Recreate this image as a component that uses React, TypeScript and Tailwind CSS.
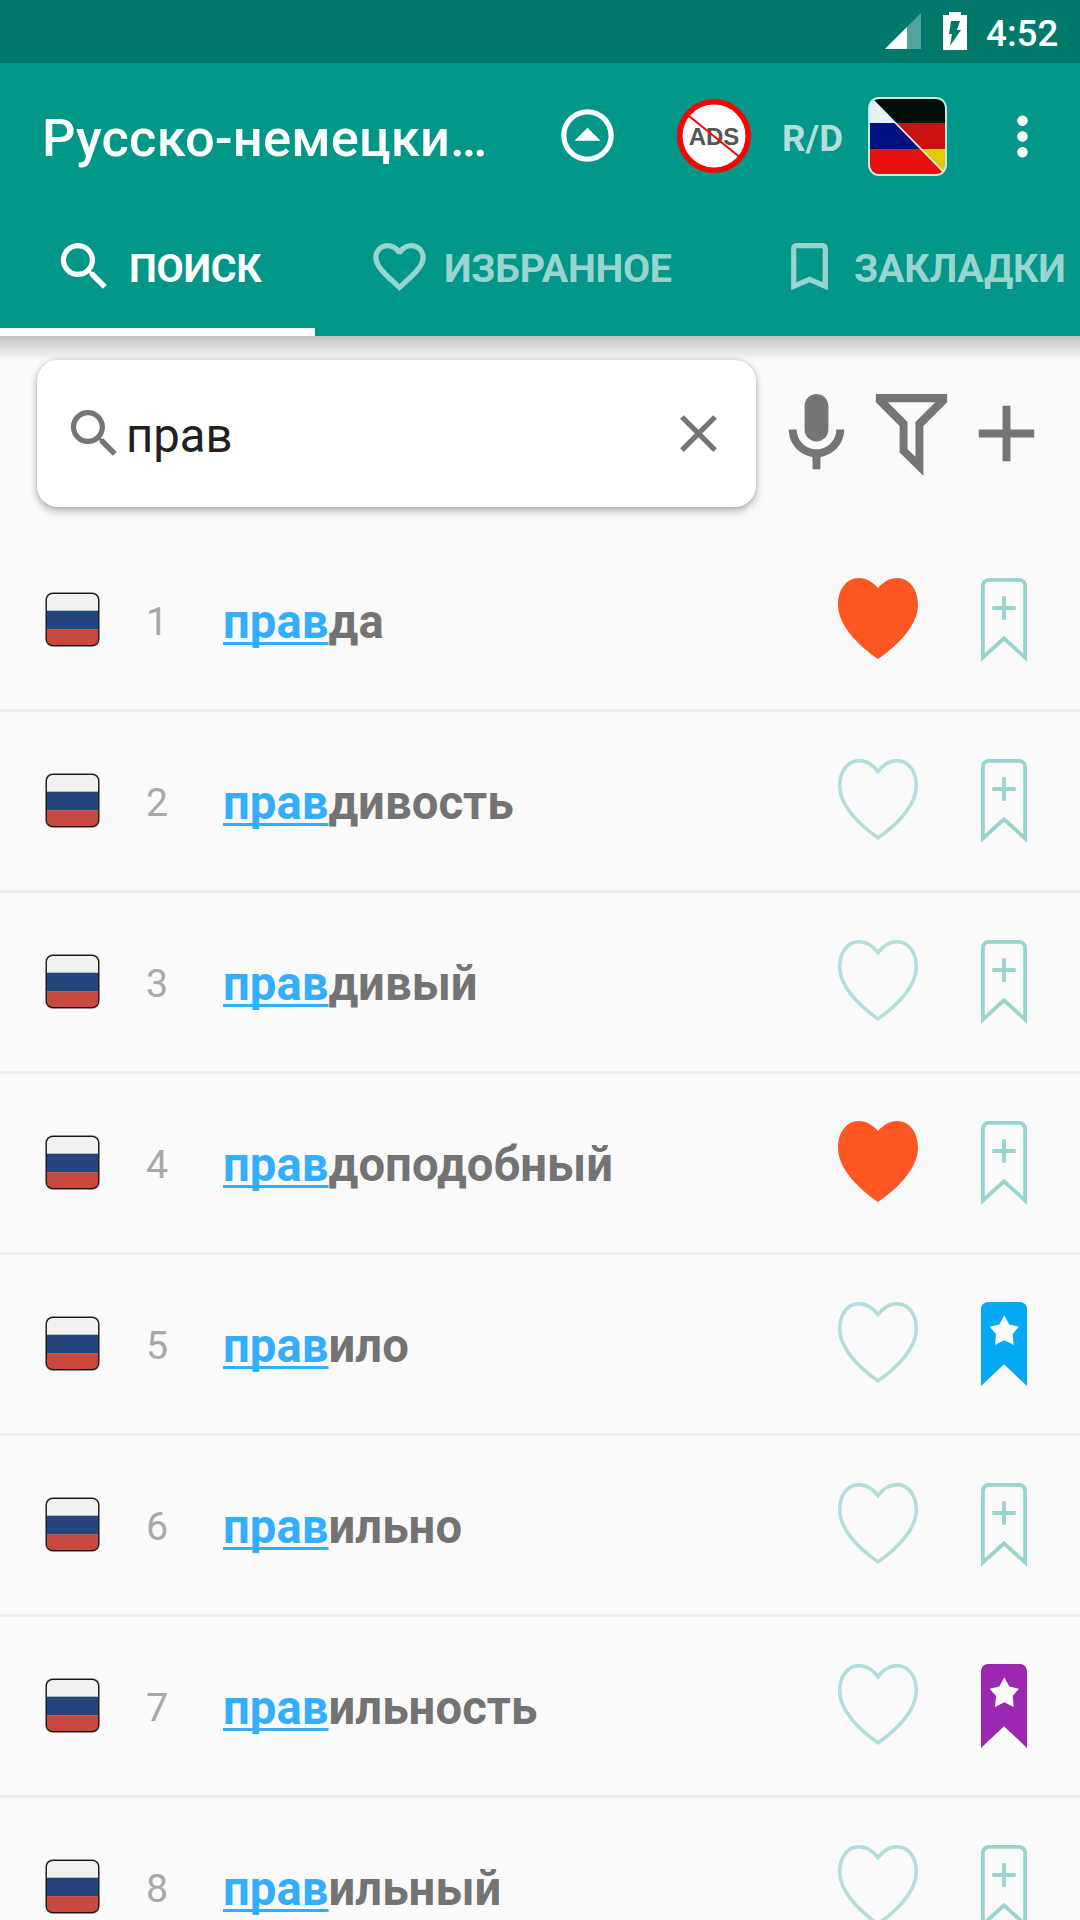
import type { ReactNode } from 'react'
import clsx from 'clsx'

type Mark = 'none' | 'blue' | 'purple'

const query = 'прав'

const words: { rest: string; liked?: boolean; mark?: Mark }[] = [
  { rest: 'да', liked: true },
  { rest: 'дивость' },
  { rest: 'дивый' },
  { rest: 'доподобный', liked: true },
  { rest: 'ило', mark: 'blue' },
  { rest: 'ильно' },
  { rest: 'ильность', mark: 'purple' },
  { rest: 'ильный' },
]

const SEARCH =
  'M15.5 14h-.79l-.28-.27C15.41 12.59 16 11.11 16 9.5 16 5.91 13.09 3 9.5 3S3 5.91 3 9.5 5.91 16 9.5 16c1.61 0 3.09-.59 4.23-1.57l.27.28v.79l5 4.99L20.49 19l-4.99-5zm-6 0C7.01 14 5 11.99 5 9.5S7.01 5 9.5 5 14 7.01 14 9.5 11.99 14 9.5 14z'
const HEART =
  'M16.5 3c-1.74 0-3.41.81-4.5 2.09C10.91 3.81 9.24 3 7.5 3 4.42 3 2 5.42 2 8.5c0 3.78 3.4 6.86 8.55 11.54L12 21.35l1.45-1.32C18.6 15.36 22 12.28 22 8.5 22 5.42 19.58 3 16.5 3zm-4.4 15.55l-.1.1-.1-.1C7.14 14.24 4 11.39 4 8.5 4 6.5 5.5 5 7.5 5c1.54 0 3.04.99 3.57 2.36h1.87C13.46 5.99 14.96 5 16.5 5c2 0 3.5 1.5 3.5 3.5 0 2.89-3.14 5.74-7.9 10.05z'
const BOOKMARK =
  'M17 3H7c-1.1 0-1.99.9-1.99 2L5 21l7-3 7 3V5c0-1.1-.9-2-2-2zm0 15l-5-2.18L7 18V5h10v13z'
const CIRCLE_UP =
  'M12 4c4.41 0 8 3.59 8 8s-3.59 8-8 8-8-3.59-8-8 3.59-8 8-8m0-2C6.48 2 2 6.48 2 12s4.48 10 10 10 10-4.48 10-10S17.52 2 12 2zM7 14l5-5 5 5z'
const MORE =
  'M12 8c1.1 0 2-.9 2-2s-.9-2-2-2-2 .9-2 2 .9 2 2 2zm0 2c-1.1 0-2 .9-2 2s.9 2 2 2 2-.9 2-2-.9-2-2-2zm0 6c-1.1 0-2 .9-2 2s.9 2 2 2 2-.9 2-2-.9-2-2-2z'
const CLOSE =
  'M19 6.41L17.59 5 12 10.59 6.41 5 5 6.41 10.59 12 5 17.59 6.41 19 12 13.41 17.59 19 19 17.59 13.41 12z'
const MIC =
  'M12 14c1.66 0 3-1.34 3-3V5c0-1.66-1.34-3-3-3S9 3.34 9 5v6c0 1.66 1.34 3 3 3zM17 11c0 2.76-2.24 5-5 5s-5-2.24-5-5H5c0 3.53 2.61 6.43 6 6.92V21h2v-3.08c3.39-.49 6-3.39 6-6.92h-2z'
const FILTER =
  'M3 2h18v2.1l-6 6v12.6l-6-5.9v-6.7l-6-6zM6 4.1l5 5v6.9l2 1.9V9.1l5-5z'
const ADD = 'M19 13h-6v6h-2v-6H5v-2h6V5h2v6h6z'

function Icon({ d, className }: { d: string; className?: string }) {
  return (
    <svg viewBox="0 0 24 24" fill="currentColor" fillRule="evenodd" className={clsx('shrink-0', className)}>
      <path d={d} />
    </svg>
  )
}

function StatusBar() {
  return (
    <div className="flex h-[63px] shrink-0 items-start bg-[#00796b] pl-[885px] text-white">
      <svg viewBox="0 0 36 36" className="mt-[13px] h-[36px] w-[36px]">
        <path d="M36 0V36H0z" fill="#fff" fillOpacity=".32" />
        <path d="M22 14V36H0z" fill="#fff" />
      </svg>
      <svg viewBox="0 0 24 38" className="mt-[12px] ml-[22px] h-[38px] w-[24px]">
        <path d="M6 0h12v3h6v35H0V3h6z" fill="#fff" />
        <path d="M8 9h9l-3 9h4L7 34l2-12H6z" fill="#00796b" />
      </svg>
      <span className="mt-[12px] ml-[19px] text-[36.75px] leading-[43px] font-medium">4:52</span>
    </div>
  )
}

function NoAds() {
  return (
    <svg viewBox="0 0 74 74" className="-mt-[1px] ml-[58px] h-[74px] w-[74px] shrink-0">
      <circle cx="37" cy="37" r="34.2" fill="#fff" stroke="#f00" strokeWidth="5.5" />
      <text x="37" y="45.7" textAnchor="middle" fontSize="24" fontWeight="700" fill="#555" className="font-['Liberation_Sans',sans-serif]">
        ADS
      </text>
      <path d="M12 17L62 57.5" stroke="#f00" strokeWidth="2" />
    </svg>
  )
}

function PairFlag() {
  return (
    <svg viewBox="0 0 79 79" className="h-[79px] w-[79px] shrink-0">
      <clipPath id="pair">
        <rect x="1" y="1" width="77" height="77" rx="10" />
      </clipPath>
      <g clipPath="url(#pair)">
        <path d="M0 0h79v26H0z" fill="#000d0b" />
        <path d="M0 26h79v26H0z" fill="#c81210" />
        <path d="M0 52h79v27H0z" fill="#e5c80e" />
        <path d="M2 0L27.5 26H0V0z" fill="#e4f2f3" />
        <path d="M0 26h27.5L53 52H0z" fill="#000f80" />
        <path d="M0 52h53l26 27H0z" fill="#e81110" />
        <path d="M2 0L79 78.5" stroke="#e4f2f1" strokeWidth="1.6" />
      </g>
      <rect x="1" y="1" width="77" height="77" rx="10" fill="none" stroke="#ccebe7" strokeWidth="1.9" />
    </svg>
  )
}

function Toolbar() {
  return (
    <div className="flex h-[147px] shrink-0 items-center pl-[42px] text-white">
      <h1 className="w-[514px] shrink-0 pt-[3px] text-[52.5px] leading-[62px] font-medium tracking-[0.14px] whitespace-nowrap">Русско-немецки…</h1>
      <Icon d={CIRCLE_UP} className="-mt-[2px] h-[63px] w-[63px]" />
      <NoAds />
      <span className="ml-[31px] w-[86px] shrink-0 pt-[3px] text-[36.75px] leading-[43px] font-bold text-[#b2dfdb]">R/D</span>
      <PairFlag />
      <Icon d={MORE} className="ml-[44px] h-[63px] w-[63px]" />
    </div>
  )
}

function Tab({ icon, label, active, className }: { icon: string; label: string; active?: boolean; className?: string }) {
  return (
    <div
      className={clsx(
        'flex h-[126px] shrink-0 items-center border-b-8 pb-[5px]',
        active ? 'border-white text-white' : 'border-transparent text-[#99d5cf]',
        className,
      )}
    >
      <Icon d={icon} className="h-[63px] w-[63px]" />
      <span className="ml-[13px] pt-[4px] text-[39.375px] leading-[46px] font-bold tracking-[-0.25px]">{label}</span>
    </div>
  )
}

function Action({ children, className }: { children: ReactNode; className?: string }) {
  return <div className={clsx('flex h-[95px] w-[95px] shrink-0', className)}>{children}</div>
}

function SearchRow() {
  return (
    <div className="flex h-[195px] shrink-0 items-start bg-[linear-gradient(#c3c3c3,#dedede_12px,#f0f0f0_20px,#fafafa_25px)] bg-size-[100%_25px] bg-no-repeat pt-[24px] pl-[37px] text-[#757575]">
      <div className="flex h-[147px] w-[719px] shrink-0 items-center rounded-[21px] bg-white pr-[26px] pl-[26px] shadow-[0_4px_8px_rgba(0,0,0,0.27),0_0_4px_rgba(0,0,0,0.16)]">
        <Icon d={SEARCH} className="h-[63px] w-[63px]" />
        <span className="flex-1 pt-[5px] text-[47.25px] leading-[56px] text-[#212121]">{query}</span>
        <Icon d={CLOSE} className="h-[63px] w-[63px]" />
      </div>
      <Action className="mt-[26px] ml-[13px]"><Icon d={MIC} className="h-full w-full" /></Action>
      <Action className="mt-[26px]"><Icon d={FILTER} className="h-full w-full" /></Action>
      <Action className="mt-[26px]"><Icon d={ADD} className="h-full w-full" /></Action>
    </div>
  )
}

function RuFlag() {
  return (
    <svg viewBox="0 0 55 55" className="-mt-[1px] h-[55px] w-[55px] shrink-0">
      <rect x="0" y="0" width="55" height="55" rx="8" fill="#b9b9b9" />
      <clipPath id="ru">
        <rect x="1.5" y="1.5" width="52" height="52" rx="6.5" />
      </clipPath>
      <g clipPath="url(#ru)">
        <path d="M0 0h55v18.7H0z" fill="#f1f1f1" />
        <path d="M0 18.7h55v18.6H0z" fill="#25467c" />
        <path d="M0 37.3h55V55H0z" fill="#c8473e" />
      </g>
      <rect x="1.3" y="1.3" width="52.4" height="52.4" rx="6.5" fill="none" stroke="#161616" strokeWidth="1.2" />
    </svg>
  )
}

function Like({ on }: { on?: boolean }) {
  return (
    <svg viewBox="0 0 80 81" className="-mt-[4px] h-[81px] w-[80px] shrink-0">
      {on ? (
        <path d="M40 10C35 4 28 0 21 0 8 0 0 12 0 27c0 19 18 39 40 54 22-15 40-35 40-54C80 12 72 0 59 0 52 0 45 4 40 10z" fill="#ff5722" />
      ) : (
        <path
          d="M40 12.6C35 6 28.5 1.7 21 1.7 9.5 1.7 1.7 12.5 1.7 27c0 18 17 37 38.3 51.9C61.3 64 78.3 45 78.3 27 78.3 12.5 70.5 1.7 59 1.7 51.5 1.7 45 6 40 12.6z"
          fill="none"
          stroke="#b2dfdb"
          strokeWidth="3.6"
        />
      )}
    </svg>
  )
}

function Ribbon({ mark = 'none' }: { mark?: Mark }) {
  return (
    <svg viewBox="0 0 46 84" className="ml-[63px] h-[84px] w-[46px] shrink-0">
      {mark === 'none' ? (
        <g fill="none" stroke="#96d4cd" strokeWidth="3.8">
          <path d="M1.9 79.5V8a6 6 0 0 1 6-6.1h30.2a6 6 0 0 1 6 6.1v71.5L23 60.3z" />
          <path d="M23 18.3v23.4M11.3 30h23.4" />
        </g>
      ) : (
        <>
          <path d="M0 84V7a7 7 0 0 1 7-7h32a7 7 0 0 1 7 7v77L23 62.3z" fill={mark === 'blue' ? '#03a9f4' : '#9c27b0'} />
          <path d="M23.3 13.3l5 9.3 9.7 2.1-6.3 7.3 1 11-9.4-4.7L14 43l1-11-6.3-7.3 9.6-2.1z" fill="#fafafa" />
        </>
      )}
    </svg>
  )
}

export default function App() {
  return (
    <div className="flex h-[1920px] w-[1080px] flex-col overflow-hidden bg-[#fafafa] font-[Roboto,sans-serif]">
      <StatusBar />

      <header className="shrink-0 bg-[#009688]">
        <Toolbar />
        <nav className="flex overflow-hidden">
          <Tab icon={SEARCH} label="ПОИСК" active className="w-[315px] pl-[53px]" />
          <Tab icon={HEART} label="ИЗБРАННОЕ" className="w-[410px] pl-[53px]" />
          <Tab icon={BOOKMARK} label="ЗАКЛАДКИ" className="w-[390px] pl-[53px]" />
        </nav>
      </header>

      <SearchRow />

      <ul>
        {words.map((w, i) => (
          <li key={w.rest} className="flex h-[181px] items-center border-b-3 border-[#eee] pl-[44.5px]">
            <RuFlag />
            <span className="w-[115px] shrink-0 pt-[4px] text-center text-[39.375px] leading-[46px] text-[#a8a8a8]">{i + 1}</span>
            <span className="ml-[8.5px] w-[615px] shrink-0 pt-[4px] text-[47.25px] leading-[56px] font-bold tracking-[0.05px] text-[#737373]">
              <span className="text-[#33aeff] underline decoration-[3px] underline-offset-[4px] [text-decoration-skip-ink:none]">{query}</span>
              {w.rest}
            </span>
            <Like on={w.liked} />
            <Ribbon mark={w.mark} />
          </li>
        ))}
      </ul>
    </div>
  )
}
